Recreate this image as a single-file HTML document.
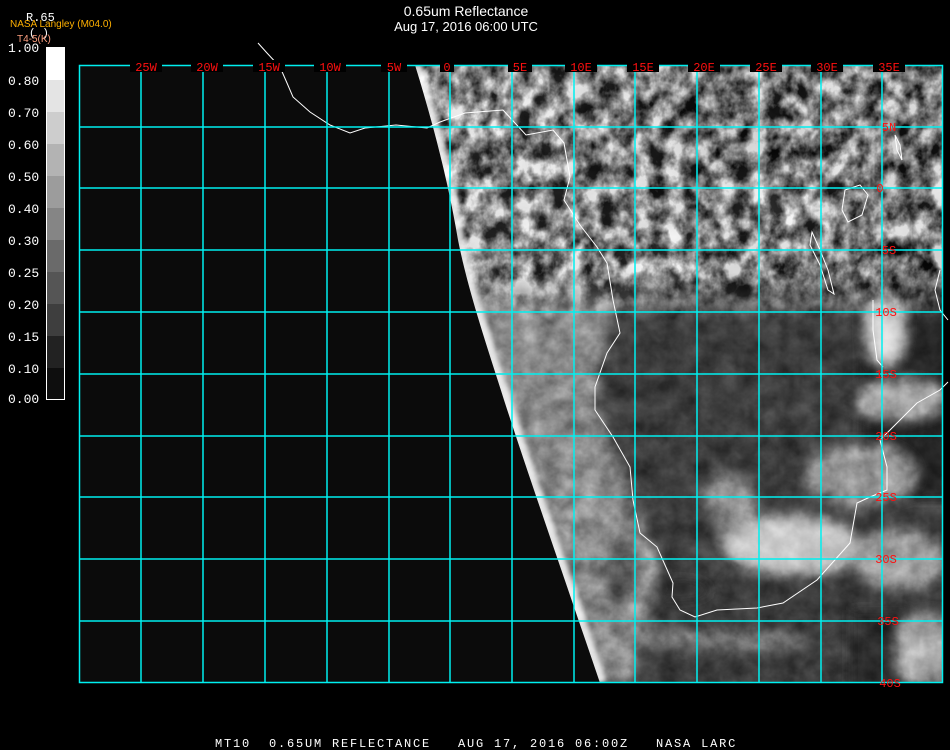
<!DOCTYPE html>
<html><head><meta charset="utf-8"><style>
html,body{margin:0;padding:0;background:#000;}
body{width:950px;height:750px;position:relative;overflow:hidden;font-family:"Liberation Sans",sans-serif;}
</style></head><body>
<svg width="950" height="750" style="position:absolute;left:0;top:0">
<defs>
<clipPath id="disk"><path d="M415,65 L943,65 L943,683 L600,683 C565,580 530,480 504,400 C485,340 468,290 458,240 C448,180 432,120 415,65 Z"/></clipPath>
<linearGradient id="tg" x1="0" y1="0" x2="0" y2="1"><stop offset="0.8" stop-color="#fff"/><stop offset="1" stop-color="#fff" stop-opacity="0"/></linearGradient>
<mask id="topm"><rect x="400" y="65" width="545" height="260" fill="url(#tg)"/></mask>
<filter id="n1" x="0" y="0" width="100%" height="100%" color-interpolation-filters="sRGB">
<feTurbulence type="fractalNoise" baseFrequency="0.05" numOctaves="4" seed="3"/>
<feColorMatrix type="matrix" values="0.9 0.9 0 0 -0.4  0.9 0.9 0 0 -0.4  0.9 0.9 0 0 -0.4  0 0 0 0 1"/>
</filter>
<filter id="n2" x="0" y="0" width="100%" height="100%" color-interpolation-filters="sRGB">
<feTurbulence type="fractalNoise" baseFrequency="0.06 0.05" numOctaves="4" seed="11"/>
<feColorMatrix type="matrix" values="1.5 1.5 0 0 -1.0  1.5 1.5 0 0 -1.0  1.5 1.5 0 0 -1.0  0 0 0 0 1"/>
</filter>
<filter id="b4"><feGaussianBlur stdDeviation="6"/></filter>
<filter id="b2"><feGaussianBlur stdDeviation="2.5"/></filter>
</defs>
<rect x="79" y="65" width="864" height="618" fill="#0b0b0b"/>
<g clip-path="url(#disk)">
<rect x="400" y="65" width="545" height="620" fill="#3c3c3c"/>
<g filter="url(#b4)">
<rect x="400" y="55" width="560" height="250" fill="#6a6a6a"/>
<ellipse cx="720" cy="130" rx="50" ry="45" fill="#2e2e2e"/>
<ellipse cx="800" cy="150" rx="35" ry="40" fill="#333"/>
<ellipse cx="900" cy="150" rx="40" ry="50" fill="#3a3a3a"/>
<ellipse cx="760" cy="280" rx="100" ry="25" fill="#444"/>
<rect x="860" y="240" width="100" height="260" fill="#262626"/>
<rect x="850" y="610" width="100" height="80" fill="#2c2c2c"/>
<path d="M400,65 L570,65 L565,200 L613,300 L595,400 L633,500 L660,560 L650,620 L630,683 L560,683 L400,300Z" fill="#8a8a8a"/>
<ellipse cx="660" cy="255" rx="40" ry="25" fill="#bbb"/>
<ellipse cx="775" cy="210" rx="35" ry="22" fill="#bbb"/>
<ellipse cx="885" cy="330" rx="18" ry="35" fill="#ddd"/>
<ellipse cx="900" cy="400" rx="45" ry="18" fill="#aaa"/>
<ellipse cx="790" cy="545" rx="70" ry="30" fill="#c8c8c8"/>
<ellipse cx="730" cy="500" rx="25" ry="25" fill="#999"/>
<ellipse cx="860" cy="475" rx="55" ry="30" fill="#999"/>
<ellipse cx="900" cy="560" rx="45" ry="30" fill="#a0a0a0"/>
<ellipse cx="925" cy="650" rx="30" ry="35" fill="#aaa"/>
<ellipse cx="720" cy="640" rx="90" ry="10" fill="#7a7a7a"/>
<ellipse cx="680" cy="590" rx="30" ry="10" fill="#2a2a2a"/>
<ellipse cx="620" cy="575" rx="15" ry="40" fill="#555"/>
</g>
<rect x="400" y="65" width="545" height="620" filter="url(#n1)" style="mix-blend-mode:overlay" opacity="0.4"/>
<g mask="url(#topm)">
<rect x="400" y="65" width="545" height="260" filter="url(#n2)" style="mix-blend-mode:overlay" opacity="0.8"/>
</g>
<path d="M415,65 C432,120 448,180 458,240 C468,290 485,340 504,400 C530,480 565,580 600,683" fill="none" stroke="#fff" stroke-width="14" filter="url(#b2)" opacity="0.8"/>
</g>
<g fill="none" stroke="#fff" stroke-width="1">
<polyline points="258,43 267,53 280,67 287,83 293,97 310,112 330,125 350,133 365,128 396,125 427,128 440,122 465,113 503,110 515,123 526,135 553,130 564,143 570,177 564,200 580,225 597,247 607,263 613,300 620,333 607,353 595,387 595,410 613,437 630,467 633,500 640,533 657,547 673,583 672,597 680,610 695,617 717,610 757,608 783,603 817,580 850,543 857,503 870,497 887,490 887,467 880,440 893,427 917,403 940,390 948,382"/>
<polyline points="873,300 873,330 877,360 883,367"/>
<path d="M845,190 L860,185 L868,195 L862,215 L848,222 L842,210Z"/>
<path d="M812,232 L820,250 L828,270 L834,294 L828,290 L820,265 L810,245Z"/>
<path d="M895,135 L900,145 L902,160 L897,150Z"/>
<polyline points="940,270 935,290 940,310 948,320"/>
</g>
<g stroke="#00f0f0" stroke-width="1.5" fill="none">
<rect x="79.5" y="65.5" width="863" height="617"/>
<path d="M141,65V683M203,65V683M265,65V683M327,65V683M389,65V683M450,65V683M512,65V683M574,65V683M635,65V683M697,65V683M759,65V683M821,65V683M882,65V683"/>
<path d="M79,127H943M79,188H943M79,250H943M79,312H943M79,374H943M79,436H943M79,497H943M79,559H943M79,621H943"/>
</g>
<g fill="#000">
<rect x="130" y="60" width="32" height="12"/><rect x="191" y="60" width="32" height="12"/><rect x="253" y="60" width="32" height="12"/><rect x="314" y="60" width="32" height="12"/><rect x="381" y="60" width="26" height="12"/><rect x="440" y="60" width="14" height="12"/><rect x="508" y="60" width="24" height="12"/><rect x="565" y="60" width="32" height="12"/><rect x="627" y="60" width="32" height="12"/><rect x="688" y="60" width="32" height="12"/><rect x="750" y="60" width="32" height="12"/><rect x="811" y="60" width="32" height="12"/><rect x="873" y="60" width="32" height="12"/>
</g>
<g fill="#ff1010" font-family="Liberation Mono, monospace" font-size="12" text-anchor="middle">
<text x="146" y="71">25W</text><text x="207" y="71">20W</text><text x="269" y="71">15W</text><text x="330" y="71">10W</text><text x="394" y="71">5W</text><text x="447" y="71">0</text><text x="520" y="71">5E</text><text x="581" y="71">10E</text><text x="643" y="71">15E</text><text x="704" y="71">20E</text><text x="766" y="71">25E</text><text x="827" y="71">30E</text><text x="889" y="71">35E</text>
<text x="889" y="131">5N</text><text x="880" y="192">0</text><text x="889" y="254">5S</text><text x="886" y="316">10S</text><text x="886" y="378">15S</text><text x="886" y="440">20S</text><text x="886" y="501">25S</text><text x="886" y="563">30S</text><text x="888" y="625">35S</text><text x="890" y="687">40S</text>
</g>
<rect x="46.5" y="47.5" width="18" height="352" fill="#fff" stroke="#fff"/>
<rect x="47" y="80" width="17" height="32" fill="#e4e4e4"/>
<rect x="47" y="112" width="17" height="32" fill="#cdcdcd"/>
<rect x="47" y="144" width="17" height="32" fill="#b3b3b3"/>
<rect x="47" y="176" width="17" height="32" fill="#9c9c9c"/>
<rect x="47" y="208" width="17" height="32" fill="#858585"/>
<rect x="47" y="240" width="17" height="32" fill="#6a6a6a"/>
<rect x="47" y="272" width="17" height="32" fill="#555"/>
<rect x="47" y="304" width="17" height="32" fill="#3e3e3e"/>
<rect x="47" y="336" width="17" height="32" fill="#222"/>
<rect x="47" y="368" width="17" height="31" fill="#0e0e0e"/>
<g fill="#fff" font-family="Liberation Mono, monospace" font-size="13">
<text x="8" y="52">1.00</text><text x="8" y="85">0.80</text><text x="8" y="117">0.70</text><text x="8" y="149">0.60</text><text x="8" y="181">0.50</text><text x="8" y="213">0.40</text><text x="8" y="245">0.30</text><text x="8" y="277">0.25</text><text x="8" y="309">0.20</text><text x="8" y="341">0.15</text><text x="8" y="373">0.10</text><text x="8" y="403">0.00</text>
</g>
<text x="26" y="21" fill="#fff" font-family="Liberation Mono, monospace" font-size="12">R.65</text>
<text x="10" y="27" fill="#ffb000" font-family="Liberation Sans, sans-serif" font-size="10">NASA Langley (M04.0)</text>
<text x="29" y="36" fill="#fff" font-family="Liberation Mono, monospace" font-size="11">(  )</text>
<text x="17" y="42" fill="#ffa080" font-family="Liberation Sans, sans-serif" font-size="10">T4-5(K)</text>
<text x="466" y="16" fill="#fff" font-size="14" text-anchor="middle" font-family="Liberation Sans, sans-serif">0.65um Reflectance</text>
<text x="466" y="31" fill="#fff" font-size="13" text-anchor="middle" font-family="Liberation Sans, sans-serif">Aug 17, 2016 06:00 UTC</text>
<text x="215" y="747" fill="#fff" font-size="12" letter-spacing="1.8" font-family="Liberation Mono, monospace" xml:space="preserve">MT10  0.65UM REFLECTANCE   AUG 17, 2016 06:00Z   NASA LARC</text>
</svg>
</body></html>
